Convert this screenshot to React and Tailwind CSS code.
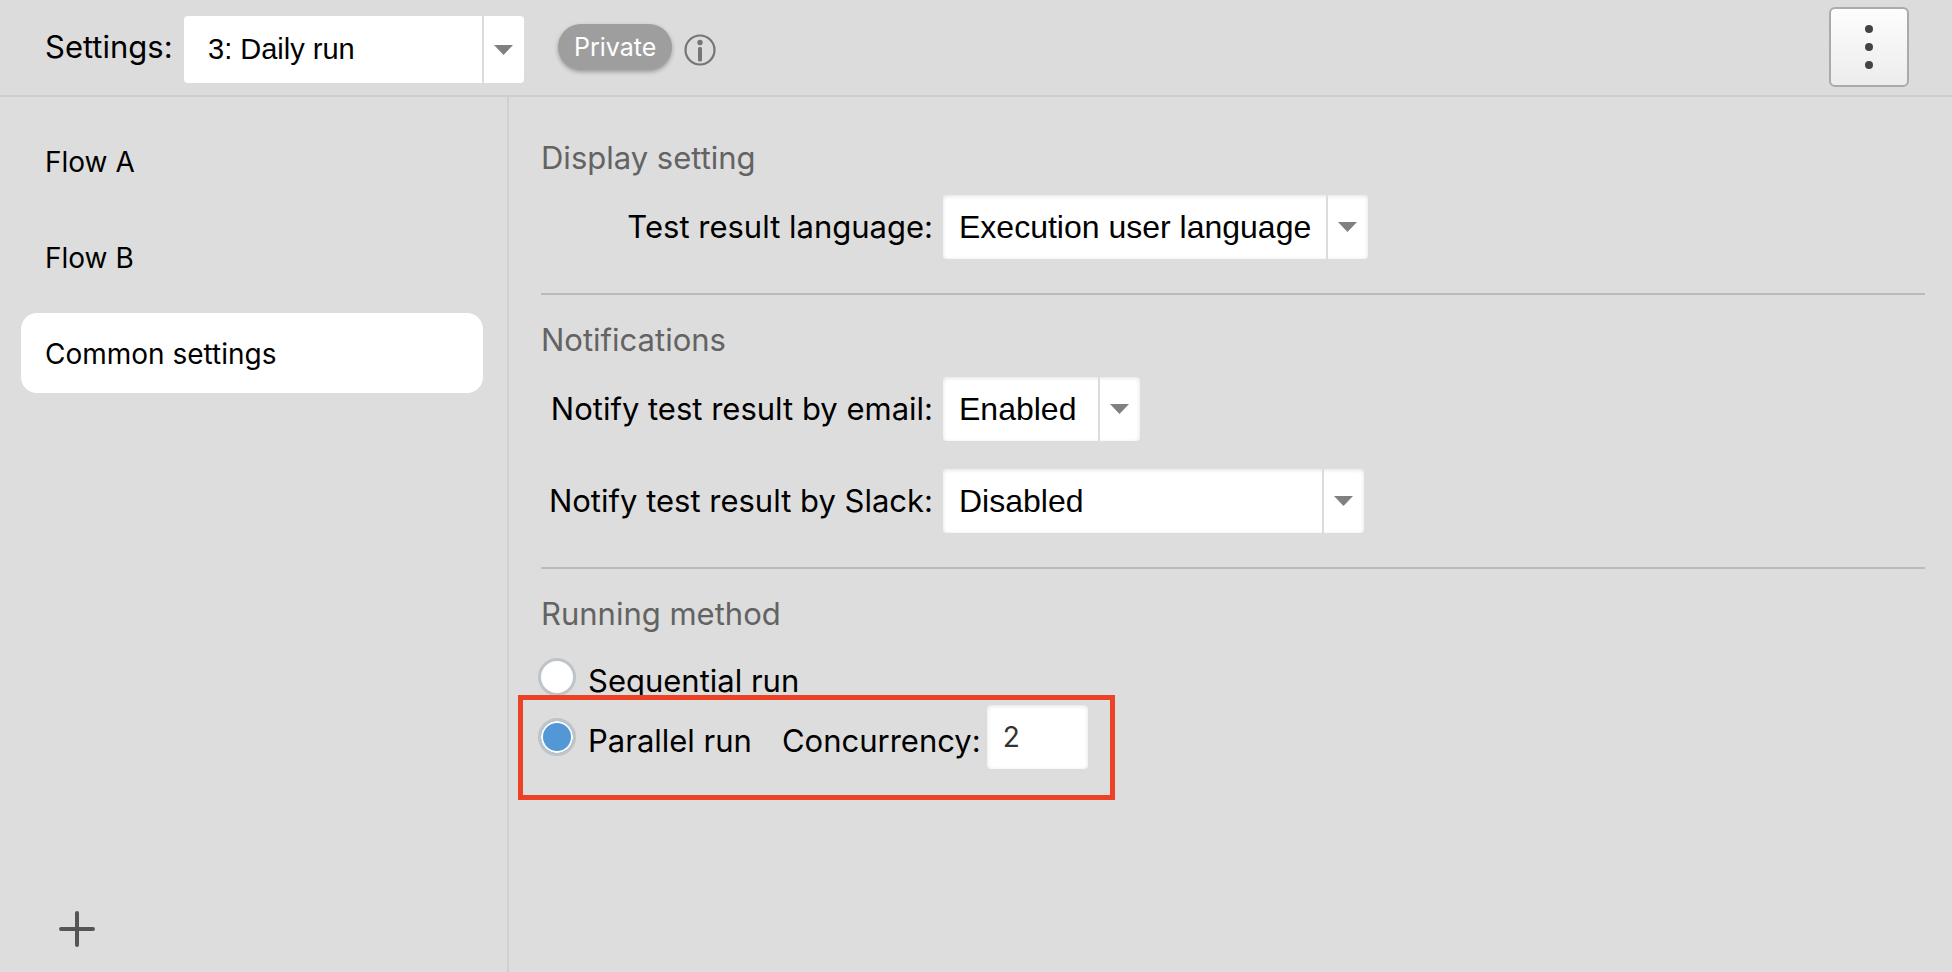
import React, { useState } from "react";

const flows = ["Flow A", "Flow B", "Common settings"];

const SelectBox = ({ id, value, onChange, options, className, flat }) => (
  <div className={`relative overflow-hidden rounded bg-white ${className}`}>
    <select
      id={id}
      value={value}
      onChange={(e) => onChange(e.target.value)}
      className={`h-full w-full appearance-none rounded bg-transparent pr-[42px] font-['Liberation_Sans',sans-serif] text-black outline-none ${flat ? "pl-6 text-[29px]" : "pl-4 text-[32px] shadow-[inset_0_1px_4px_rgba(0,0,0,0.12)]"}`}
    >
      {options.map((o) => (
        <option key={o}>{o}</option>
      ))}
    </select>
    <span className="pointer-events-none absolute inset-y-0 right-0 flex w-[42px] items-center justify-center border-l-2 border-[#dcdcdc]">
      <svg width="20" height="10" viewBox="0 0 20 10" fill="#808080">
        <path d="M0 0h19L9.500 10z" />
      </svg>
    </span>
  </div>
);

const Section = ({ title, last, children }) => (
  <section className={last ? "" : "mb-[25px] border-b-2 border-[#bababa] pb-[34px]"}>
    <h2 className="mb-[17px] text-[31px] leading-[40px] text-[#636363]">{title}</h2>
    {children}
  </section>
);

const Field = ({ id, label, children }) => (
  <div className="flex items-center gap-[10px]">
    <label htmlFor={id} className="w-[392px] text-right text-[31px] leading-[40px] whitespace-nowrap">
      {label}
    </label>
    {children}
  </div>
);

const Radio = ({ id, checked, onChange }) => (
  <input
    type="radio"
    name="method"
    id={id}
    checked={checked}
    onChange={onChange}
    className="size-[38px] shrink-0 appearance-none rounded-full border-[3px] border-[#bfc4c8] bg-white checked:bg-[#5497d7] checked:shadow-[inset_0_0_0_2px_#fff]"
  />
);

const App = () => {
  const [active, setActive] = useState("Common settings");
  const [setting, setSetting] = useState("3: Daily run");
  const [language, setLanguage] = useState("Execution user language");
  const [email, setEmail] = useState("Enabled");
  const [slack, setSlack] = useState("Disabled");
  const [method, setMethod] = useState("parallel");
  const [concurrency, setConcurrency] = useState("2");

  return (
    <div className="flex min-h-screen flex-col bg-[#dddddd] font-['Inter',sans-serif] text-black">
      <header className="flex h-[97px] items-center border-b-2 border-[#cecece] bg-[#dcdcdc] pr-[43px] pb-[2px] pl-[45px]">
        <label htmlFor="setting" className="w-[139px] text-[31px] leading-[40px]">Settings:</label>
        <SelectBox id="setting" value={setting} onChange={setSetting} options={["3: Daily run"]} className="mt-[6px] h-[67px] w-[340px]" flat />
        <span className="ml-[34px] flex h-[46px] items-center rounded-full bg-[#9e9e9e] px-4 pt-[2px] text-[25px] text-white shadow-[0_2px_4px_rgba(0,0,0,0.3)]">Private</span>
        <button aria-label="About private settings" className="mt-[6px] ml-3">
          <svg width="32" height="32" viewBox="0 0 32 32" fill="#757575">
            <circle cx="16" cy="16" r="14.5" fill="none" stroke="#757575" strokeWidth="2.2" />
            <circle cx="16" cy="8.5" r="2.7" />
            <rect x="14" y="13" width="4" height="14.5" rx="1.5" />
          </svg>
        </button>
        <button aria-label="Menu" className="ml-auto flex size-20 items-center justify-center rounded-md border-2 border-[#aaaaaa] bg-linear-to-b from-[#fdfdfd] to-[#ececec]">
          <svg width="8" height="44" viewBox="0 0 8 44" fill="#444">
            <circle cx="4" cy="4" r="4" />
            <circle cx="4" cy="22" r="4" />
            <circle cx="4" cy="40" r="4" />
          </svg>
        </button>
      </header>

      <div className="flex flex-1">
        <aside className="flex w-[509px] shrink-0 flex-col border-r-2 border-[#cfcfcf] pt-6 pr-6 pb-[25px] pl-[21px]">
          <nav className="flex flex-col gap-4">
            {flows.map((f) => (
              <button key={f} onClick={() => setActive(f)} className={`h-20 rounded-2xl px-6 pt-[2px] text-left text-[28px] ${f === active ? "bg-white" : ""}`}>
                {f}
              </button>
            ))}
          </nav>
          <button aria-label="Add flow" className="mt-auto ml-[38px] size-9">
            <svg width="36" height="36" viewBox="0 0 36 36" fill="none" stroke="#555" strokeWidth="4" strokeLinecap="round">
              <path d="M18 2v32M2 18h32" />
            </svg>
          </button>
        </aside>

        <main className="flex-1 pt-[41px] pr-[27px] pl-8">
          <Section title="Display setting">
            <Field id="language" label="Test result language:">
              <SelectBox id="language" value={language} onChange={setLanguage} options={["Execution user language"]} className="h-16 w-[425px]" />
            </Field>
          </Section>

          <Section title="Notifications">
            <div className="flex flex-col gap-7">
              <Field id="email" label="Notify test result by email:">
                <SelectBox id="email" value={email} onChange={setEmail} options={["Enabled", "Disabled"]} className="h-16 w-[197px]" />
              </Field>
              <Field id="slack" label="Notify test result by Slack:">
                <SelectBox id="slack" value={slack} onChange={setSlack} options={["Disabled", "Enabled"]} className="h-16 w-[421px]" />
              </Field>
            </div>
          </Section>

          <Section title="Running method" last>
            <div className="-ml-[3px] pt-[7px] text-[31px] leading-[40px]">
              <div className="flex h-[37px] items-center gap-3">
                <Radio id="sequential" checked={method === "sequential"} onChange={() => setMethod("sequential")} />
                <label htmlFor="sequential" className="pt-2">Sequential run</label>
              </div>
              {/* the highlighted option sits on top of the row above */}
              <div className="relative -ml-5 flex w-fit items-center border-[5px] border-[#ec4124] bg-[#dddddd] pt-[5px] pr-[22px] pb-[26px] pl-[15px]">
                <Radio id="parallel" checked={method === "parallel"} onChange={() => setMethod("parallel")} />
                <label htmlFor="parallel" className="pt-2 pl-3">Parallel run</label>
                <label htmlFor="concurrency" className="pt-2 pr-[6px] pl-[30px]">Concurrency:</label>
                <input
                  id="concurrency"
                  value={concurrency}
                  onChange={(e) => setConcurrency(e.target.value)}
                  className="h-16 w-[101px] rounded bg-white px-4 text-[28px] text-[#333] shadow-[inset_0_1px_4px_rgba(0,0,0,0.12)] outline-none"
                />
              </div>
            </div>
          </Section>
        </main>
      </div>
    </div>
  );
};

export default App;
